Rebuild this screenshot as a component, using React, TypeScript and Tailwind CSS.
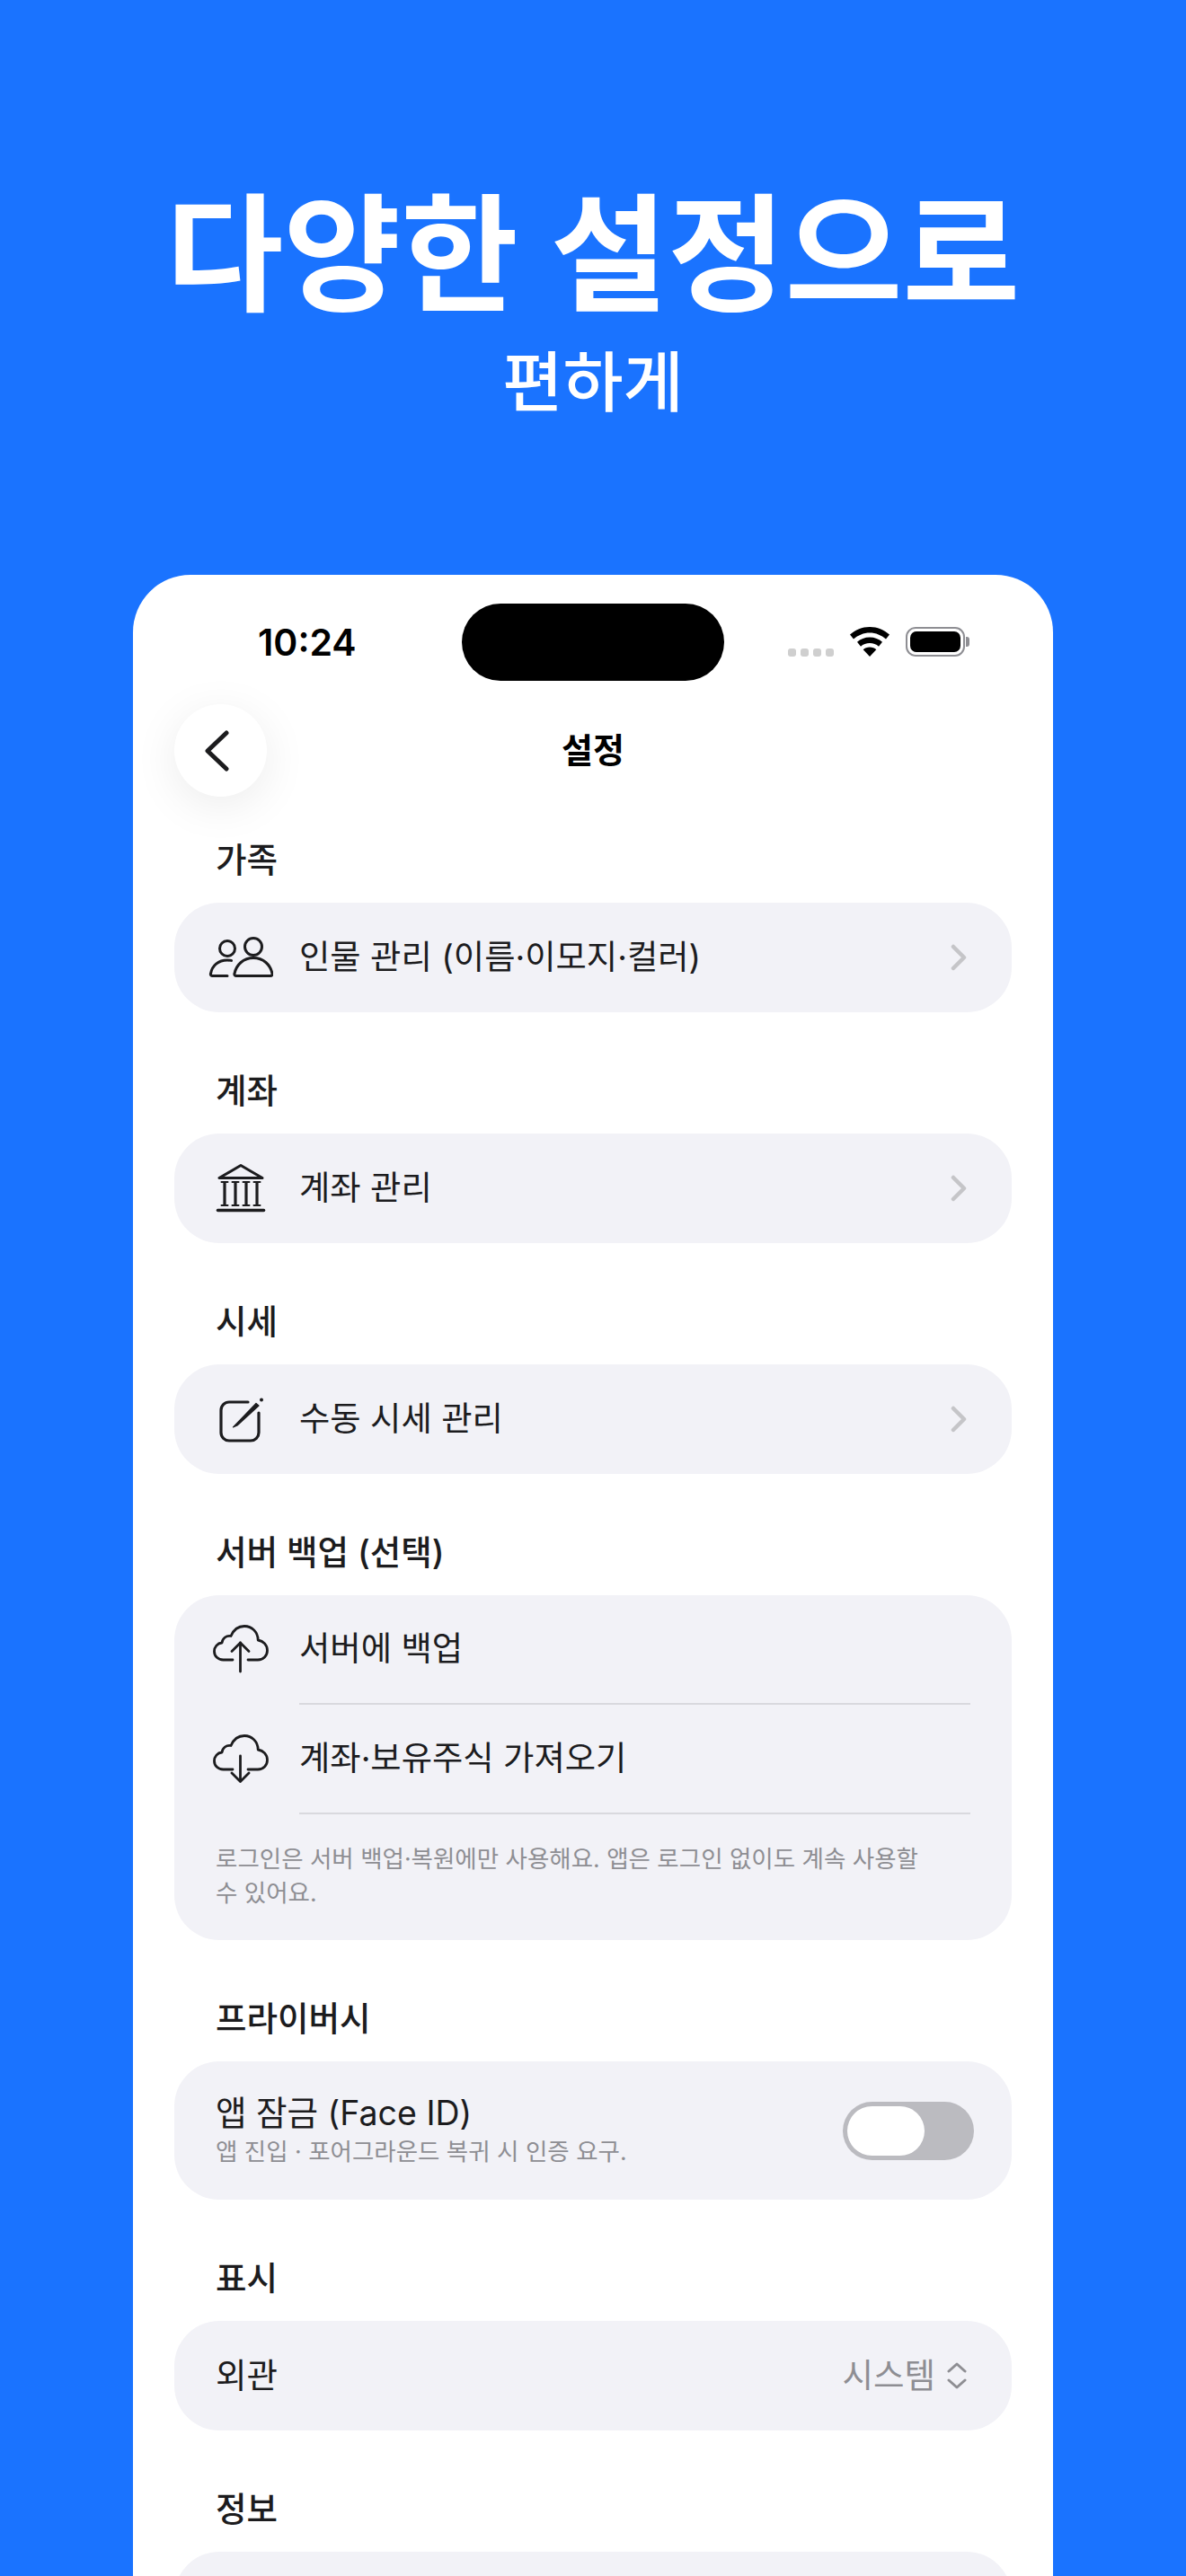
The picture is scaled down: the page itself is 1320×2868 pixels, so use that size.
import type { ReactNode } from "react";

const FONT = "font-['Inter','Noto_Sans_CJK_KR',sans-serif]";

function PeopleIcon() {
  return (
    <svg width="72" height="50" viewBox="0 0 72 50" fill="none" stroke="#1c1c1e" strokeWidth="3" strokeLinecap="round" strokeLinejoin="round">
      <circle cx="21" cy="15" r="8.500" />
      <circle cx="50" cy="13" r="9.500" />
      <path d="M21 45.500H4.500c-1.500 0-2.500-1-2-2.500C4 34 11 28 21 28c1.500 0 3 .1 4.500.4" />
      <path d="M31 45.500c-1.500 0-2.500-1-2-2.500C31 33 39 25.500 50 25.500S69 33 71 43c.5 1.500-.5 2.500-2 2.500z" />
    </svg>
  );
}

function BankIcon() {
  return (
    <svg width="56" height="56" viewBox="0 0 56 56" fill="none" stroke="#1c1c1e" strokeWidth="2.600" strokeLinecap="round" strokeLinejoin="round">
      <path d="M28 2.500 4 16.500h48z" strokeWidth="3" />
      <path d="M10 22v24M22 22v24M34 22v24M46 22v24" strokeWidth="3.200" />
      <path d="M6.500 21h7M18.500 21h7M30.500 21h7M42.500 21h7M6.500 47h7M18.500 47h7M30.500 47h7M42.500 47h7" strokeWidth="2" />
      <path d="M2.500 52.500h51" strokeWidth="3.600" />
    </svg>
  );
}

function EditIcon() {
  return (
    <svg className="ml-[4px]" width="52" height="52" viewBox="0 0 52 52" fill="none" stroke="#1c1c1e" strokeWidth="3.200" strokeLinecap="round" strokeLinejoin="round">
      <path d="M32 7H11a9 9 0 0 0-9 9v25a9 9 0 0 0 9 9h24a9 9 0 0 0 9-9V19" />
      <path d="M15.500 35 41 8.500l3 2.500-24 22z" fill="#1c1c1e" strokeWidth="1.200" />
      <circle cx="47" cy="4.500" r="2" fill="#1c1c1e" stroke="none" />
    </svg>
  );
}

function CloudIcon({ down }: { down?: boolean }) {
  return (
    <svg width="62" height="54" viewBox="0 0 62 54" fill="none" stroke="#1c1c1e" strokeWidth="2.800" strokeLinecap="round" strokeLinejoin="round">
      <path d="M22 39H11.500C5.700 39 1.500 35 1.500 29.500c0-5 3.500-9 8.500-9.500 .6-5 5-8.500 10-7.500C23 5.500 28.500 1.500 35 1.500c8.500 0 15 6.500 15.200 15.500 6 1 10.300 5.500 10.300 11.500 0 6-4.500 10.500-10.500 10.500H39" />
      {down ? (
        <>
          <path d="M30.500 24v28" />
          <path d="M21 43l9.500 9.500L40 43" />
        </>
      ) : (
        <>
          <path d="M30.500 52V20" />
          <path d="M21 29.500l9.500-9.500 9.500 9.500" />
        </>
      )}
    </svg>
  );
}

function Chevron() {
  return (
    <svg width="18" height="30" viewBox="0 0 18 30" fill="none" stroke="#c5c5c8" strokeWidth="4.500" strokeLinecap="round" strokeLinejoin="round">
      <path d="M3 3l12 12L3 27" />
    </svg>
  );
}

function Label({ children }: { children: ReactNode }) {
  return <div className="mb-[22px] h-[50px] pl-[46px] text-[37.500px] leading-[50px] font-medium text-[#1c1c1e]">{children}</div>;
}

function NavRow({ icon, text, chevron, compact }: { icon: ReactNode; text: string; chevron?: boolean; compact?: boolean }) {
  return (
    <div className={compact ? "flex h-[120px] items-center pl-[34px] pr-[50px]" : "flex h-[122px] items-center pl-[34px] pr-[50px]"}>
      <div className="flex w-[80px] shrink-0 justify-center">{icon}</div>
      <div className="ml-[25px] flex-1 text-[37.300px] text-[#1c1c1e]">{text}</div>
      {chevron && <Chevron />}
    </div>
  );
}

function Section({ label, children }: { label: string; children: ReactNode }) {
  return (
    <section className="mb-[63px]">
      <Label>{label}</Label>
      {children}
    </section>
  );
}

function Card({ children }: { children: ReactNode }) {
  return <div className="rounded-[50px] bg-[#f2f2f7]">{children}</div>;
}

export default function App() {
  return (
    <main className={`${FONT} flex h-[2868px] flex-col overflow-hidden bg-[#1a73ff]`}>
      {/* Headline */}
      <div className="flex h-[640px] shrink-0 flex-col items-center pt-[193px] text-white">
        <h1 className="text-[142px] leading-[180px] font-semibold">다양한 설정으로</h1>
        <p className="mt-[8px] text-[73px] leading-[90px] font-medium">편하게</p>
      </div>

      {/* Phone */}
      <div className="mx-[148px] flex-1 rounded-t-[64px] bg-white px-[46px]">
        {/* Status bar */}
        <div className="flex h-[118px] items-start justify-between pt-[32px]">
          <div className="w-[319px] pl-[93px] pt-[18px] text-[41px] leading-[50px] font-semibold text-black">10:24</div>
          <div className="h-[86px] w-[292px] rounded-full bg-black" />
          <div className="flex w-[319px] items-start pt-[26px] pl-[70px]">
            <div className="mt-[24px] flex gap-[5px]">
              {[0, 1, 2, 3].map((i) => (
                <div key={i} className="h-[9px] w-[9px] rounded-[3px] bg-[#cfcfcf]" />
              ))}
            </div>
            <svg className="ml-[18px]" width="44" height="33" viewBox="0 0 44 33" fill="#000">
              <path d="M22 0c8.500 0 16 3.300 22 8.500l-4 5C35 9.200 28.800 6.500 22 6.500S9 9.200 4 13.500l-4-5C6 3.300 13.500 0 22 0z" />
              <path d="M22 11.500c5.500 0 10.300 2 14 5.200l-4 5C29.300 19.300 25.800 18 22 18s-7.300 1.300-10 3.700l-4-5c3.700-3.200 8.500-5.200 14-5.200z" />
              <path d="M22 22.500c3 0 5.500 1 7.300 2.700L22 33l-7.300-7.800c1.800-1.700 4.300-2.700 7.300-2.700z" />
            </svg>
            <div className="ml-[18px] flex items-center">
              <div className="h-[33px] w-[66px] rounded-[11px] border-[2.500px] border-[#8e8e93] p-[3px]">
                <div className="h-full w-full rounded-[7px] bg-black" />
              </div>
              <div className="ml-[1px] h-[11px] w-[4px] rounded-r-[3px] bg-[#8e8e93]" />
            </div>
          </div>
        </div>

        {/* Nav */}
        <div className="mt-[26px] mb-[46px] grid grid-cols-[103px_1fr_103px] items-center">
          <div className="flex h-[103px] w-[103px] items-center justify-center rounded-full bg-white shadow-[0_10px_50px_rgba(0,0,0,0.08)]">
            <svg className="mr-[6px]" width="30" height="46" viewBox="0 0 30 46" fill="none" stroke="#1c1c1e" strokeWidth="5" strokeLinecap="round" strokeLinejoin="round">
              <path d="M24 3 3 23l21 20" />
            </svg>
          </div>
          <div className="text-center text-[38px] font-semibold text-black">설정</div>
        </div>

        <Section label="가족">
          <Card>
            <NavRow icon={<PeopleIcon />} text="인물 관리 (이름·이모지·컬러)" chevron />
          </Card>
        </Section>

        <Section label="계좌">
          <Card>
            <NavRow icon={<BankIcon />} text="계좌 관리" chevron />
          </Card>
        </Section>

        <Section label="시세">
          <Card>
            <NavRow icon={<EditIcon />} text="수동 시세 관리" chevron />
          </Card>
        </Section>

        <Section label="서버 백업 (선택)">
          <Card>
            <NavRow compact icon={<CloudIcon />} text="서버에 백업" />
            <div className="ml-[139px] mr-[46px] h-[2px] bg-[#d9d9de]" />
            <NavRow compact icon={<CloudIcon down />} text="계좌·보유주식 가져오기" />
            <div className="ml-[139px] mr-[46px] h-[2px] bg-[#d9d9de]" />
            <p className="pl-[46px] pr-[84px] pt-[30px] pb-[34px] text-[26.500px] leading-[38px] text-[#8e8e93]">
              로그인은 서버 백업·복원에만 사용해요. 앱은 로그인 없이도 계속 사용할 수 있어요.
            </p>
          </Card>
        </Section>

        <Section label="프라이버시">
          <Card>
            <div className="flex h-[154px] items-center justify-between pl-[46px] pr-[42px]">
              <div>
                <div className="text-[37.500px] leading-[46px] text-[#1c1c1e]">앱 잠금 (Face ID)</div>
                <div className="text-[26.500px] leading-[38px] text-[#8e8e93]">앱 진입 · 포어그라운드 복귀 시 인증 요구.</div>
              </div>
              <div className="h-[65px] w-[146px] rounded-full bg-[#bbbbc0] p-[5px]">
                <div className="h-[55px] w-[86px] rounded-full bg-white" />
              </div>
            </div>
          </Card>
        </Section>

        <Section label="표시">
          <Card>
            <div className="flex h-[122px] items-center justify-between pl-[46px] pr-[50px]">
              <span className="text-[37.500px] text-[#1c1c1e]">외관</span>
              <div className="flex items-center gap-[13px] text-[37.500px] text-[#8e8e93]">
                시스템
                <svg width="22" height="32" viewBox="0 0 22 32" fill="none" stroke="#8e8e93" strokeWidth="3" strokeLinecap="round" strokeLinejoin="round">
                  <path d="M2 11l9-8 9 8M2 21l9 8 9-8" />
                </svg>
              </div>
            </div>
          </Card>
        </Section>

        <Section label="정보">
          <Card>
            <div className="h-[122px]" />
          </Card>
        </Section>
      </div>
    </main>
  );
}
